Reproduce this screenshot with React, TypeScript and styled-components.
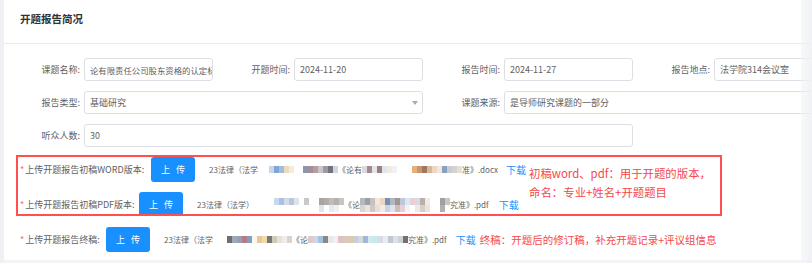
import React from "react";
import styled, { createGlobalStyle } from "styled-components";

const Global = createGlobalStyle`
  html, body { margin: 0; padding: 0; background: #ffffff; }
  body {
    font-family: "Microsoft YaHei", "Noto Sans CJK SC", "Noto Sans", sans-serif;
    -webkit-font-smoothing: antialiased;
  }
`;

const Page = styled.div`
  position: relative;
  display: flex;
  width: 812px;
  height: 263px;
  overflow: hidden;
  background: #f3f4f6;
`;

const Rail = styled.div`
  flex: none;
  width: 4px;
  background: #eef0f3;
`;

const Card = styled.div`
  flex: none;
  width: 808px;
  height: 260px;
  background: #ffffff;
  overflow: hidden;
`;

const ScrollShade = styled.div`
  position: absolute;
  top: 0;
  right: 0;
  width: 11px;
  height: 100%;
  background: linear-gradient(to right, rgba(242, 243, 245, 0.55), rgba(238, 240, 243, 0.9));
`;

const Header = styled.div`
  height: 44px;
  box-sizing: border-box;
  padding: 12px 0 0 16px;
  border-bottom: 1px solid #e8eaee;
  font-size: 10.5px;
  line-height: 14px;
  font-weight: 700;
  color: #303133;
`;

const FormGrid = styled.div`
  display: grid;
  grid-template-columns: repeat(4, 210px);
  row-gap: 10px;
  padding-top: 14px;
`;

const Field = styled.div<{ $span?: number }>`
  grid-column: span ${(p) => p.$span ?? 1};
  display: flex;
  align-items: center;
  height: 23px;
`;

const Label = styled.label`
  flex: none;
  width: 80px;
  box-sizing: border-box;
  padding-right: 4px;
  text-align: right;
  font-size: 9px;
  color: #606266;
  white-space: nowrap;
`;

const Input = styled.div<{ $small?: boolean }>`
  position: relative;
  flex: none;
  width: calc(100% - 81px);
  height: 23px;
  box-sizing: border-box;
  border: 1px solid #dcdfe6;
  border-radius: 3px;
  padding: 0 5px;
  display: flex;
  align-items: center;
  font-size: ${(p) => (p.$small ? 8.4 : 9)}px;
  color: #606266;
  white-space: nowrap;
  overflow: hidden;
`;

const Caret = styled.span`
  margin-left: auto;
  margin-right: -1px;
  width: 0;
  height: 0;
  border-left: 3px solid transparent;
  border-right: 3px solid transparent;
  border-top: 4px solid #a8abb2;
`;

const Uploads = styled.div`
  padding: 8px 0 0 12px;
`;

const Callout = styled.div`
  display: flex;
  align-items: flex-start;
  width: 706px;
  height: 61px;
  box-sizing: border-box;
  border: 2px solid #ff4f4f;
  padding-left: 2px;
  overflow: hidden;
`;

const RowStack = styled.div`
  flex: none;
  display: flex;
  flex-direction: column;
  gap: 10px;
`;

const UploadRow = styled.div<{ $indent?: number; $top?: number }>`
  display: flex;
  align-items: center;
  height: 25px;
  white-space: nowrap;
  padding-left: ${(p) => p.$indent ?? 0}px;
  margin-top: ${(p) => p.$top ?? 0}px;
`;

const UploadLabel = styled.span<{ $w: number }>`
  flex: none;
  width: ${(p) => p.$w}px;
  font-size: 9px;
  color: #606266;
`;

const Star = styled.span`
  color: #f56c6c;
  margin-right: 1px;
`;

const UploadButton = styled.button`
  flex: none;
  width: 44px;
  height: 25px;
  margin: 0 14px 0 0;
  padding: 0;
  border: none;
  border-radius: 3px;
  background: #1890ff;
  color: #ffffff;
  font-family: inherit;
  font-size: 9px;
  word-spacing: 4px;
`;

const FileName = styled.span`
  display: inline-flex;
  align-items: center;
  font-size: 8px;
  color: #606266;
`;

const MosaicGrid = styled.span<{ $rows: number; $ml: number }>`
  display: inline-grid;
  grid-auto-flow: column;
  grid-template-rows: repeat(${(p) => p.$rows}, 7px);
  grid-auto-columns: 5px;
  margin-left: ${(p) => p.$ml}px;
`;

const Tile = styled.span<{ $c: string }>`
  background: ${(p) => p.$c};
`;

const DownloadLink = styled.a<{ $ml: number }>`
  margin-left: ${(p) => p.$ml}px;
  font-size: 10px;
  color: #1890ff;
  text-decoration: none;
`;

const Note = styled.div`
  flex: none;
  margin-left: 3px;
  padding-top: 7px;
  font-size: 11.4px;
  line-height: 19px;
  color: #f5484a;
  white-space: nowrap;
`;

const InlineNote = styled.span`
  margin-left: 4px;
  font-size: 10.5px;
  color: #f5484a;
`;

function Mosaic({ colors, rows = 1, ml = 0 }: { colors: string[]; rows?: number; ml?: number }) {
  return (
    <MosaicGrid $rows={rows} $ml={ml}>
      {colors.map((c, i) => (
        <Tile key={i} $c={c} />
      ))}
    </MosaicGrid>
  );
}

const T = "transparent";

export default function App() {
  return (
    <>
      <Global />
      <Page>
        <Rail />
        <Card>
          <Header>开题报告简况</Header>
          <FormGrid>
            <Field>
              <Label>课题名称:</Label>
              <Input $small>论有限责任公司股东资格的认定标准</Input>
            </Field>
            <Field>
              <Label>开题时间:</Label>
              <Input>2024-11-20</Input>
            </Field>
            <Field>
              <Label>报告时间:</Label>
              <Input>2024-11-27</Input>
            </Field>
            <Field>
              <Label>报告地点:</Label>
              <Input>法学院314会议室</Input>
            </Field>
            <Field $span={2}>
              <Label>报告类型:</Label>
              <Input>
                基础研究
                <Caret />
              </Input>
            </Field>
            <Field $span={2}>
              <Label>课题来源:</Label>
              <Input>是导师研究课题的一部分</Input>
            </Field>
            <Field $span={3}>
              <Label>听众人数:</Label>
              <Input>30</Input>
            </Field>
          </FormGrid>

          <Uploads>
            <Callout>
              <RowStack>
                <UploadRow>
                  <UploadLabel $w={131}>
                    <Star>*</Star>上传开题报告初稿WORD版本:
                  </UploadLabel>
                  <UploadButton>上 传</UploadButton>
                  <FileName>
                    <span>23法律（法学</span>
                    <Mosaic ml={11} colors={["#c9d6e6", "#7fa6d6", "#a3bcdc", "#e9dcbf", "#f4ecd8"]} />
                    <Mosaic ml={9} colors={["#8e94a9", "#a58e95", "#b59da1", "#c9c5c9", "#9b9ba1", "#6f7481", "#d6d6da"]} />
                    <span>《论有</span>
                    <Mosaic colors={["#e0d8de", "#a4888f", "#e8e4e6", "#9a7f86", "#dfe6ee", "#f3ecdc", "#eef2f6", T]} />
                    <Mosaic ml={10} colors={["#e6b07e", "#c79770", "#a07862", "#d8b89a", "#eed7c0", "#f0e8dc", "#8aa0bc", "#c8ccd4", "#d6d2cc", "#e4e0d8"]} />
                    <span>准》.docx</span>
                  </FileName>
                  <DownloadLink $ml={8} href="#">下载</DownloadLink>
                </UploadRow>
                <UploadRow>
                  <UploadLabel $w={119}>
                    <Star>*</Star>上传开题报告初稿PDF版本:
                  </UploadLabel>
                  <UploadButton>上 传</UploadButton>
                  <FileName>
                    <span>23法律（法学）</span>
                    <Mosaic
                      ml={20}
                      rows={2}
                      colors={["#c8d8ee", T, "#a9c2e4", T, "#d5dce8", T, "#b8c8dc", T, "#dde4ee", T, T, T, "#c8c8cc", T, T, T, T, T, "#a8a4a0", "#dde6f0", "#b0aca8", T, "#c0bcb8", "#e4eaf2", "#b4b0ac", "#eef0f4", "#c8c4c0", T]}
                    />
                    <span>《论</span>
                    <Mosaic
                      rows={2}
                      colors={["#b8b8bc", "#d8d4d0", "#9aa0a8", "#e8e4e0", "#c8c0bc", "#d0c8c4", "#f0e8e0", "#e8e0d8", "#e8d8c0", "#f4ece0", "#7890b8", "#c8d4e4", "#b0b8c4", "#e0e4ea", "#a09890", "#c8c0b8", "#c0c8d8", "#e8d0d8", "#d8e8f8", "#f0f4f8", "#e8d0d8", T, "#dcd8e0", "#eee8ec", "#b8b0a8", "#d8d0c8", "#f0ece4", "#e8e4e0", T, T, T, T, "#a0a0a0", "#b0b0b0", "#c8c8c8", T]}
                    />
                    <span>究准》.pdf</span>
                  </FileName>
                  <DownloadLink $ml={10} href="#">下载</DownloadLink>
                </UploadRow>
              </RowStack>
              <Note>
                初稿word、pdf：用于开题的版本，
                <br />
                命名：专业+姓名+开题题目
              </Note>
            </Callout>

            <UploadRow $indent={4} $top={11}>
              <UploadLabel $w={86}>
                <Star>*</Star>上传开题报告终稿:
              </UploadLabel>
              <UploadButton>上 传</UploadButton>
              <FileName>
                <span>23法律（法学</span>
                <Mosaic
                  ml={14}
                  colors={["#6e6e70", "#a0a8b8", "#98a0b0", "#b87c80", "#7aa0d0", "#fff8e8", "#e8c898", "#f0d8b0", "#787878", "#d0c8b8", "#e4e0dc", "#f0ece8", "#d8d4d0"]}
                />
                <span>《论</span>
                <Mosaic
                  colors={["#e0c8c8", "#c8d8e8", "#a8c0e0", "#888888", "#e8e8e8", "#f0f0f0", "#e0c0c0", "#d8c8c0", "#e0c8a8", "#c0d0e0", "#d8d8d8", "#a0b8d8", "#d0e8f0", "#c8e8f0", "#d8dce0", "#e8ecf0", "#bfc8d0", "#e0e0e4", "#d0d0d4", "#707078"]}
                />
                <span>究准》.pdf</span>
              </FileName>
              <DownloadLink $ml={9} href="#">下载</DownloadLink>
              <InlineNote>终稿：开题后的修订稿，补充开题记录+评议组信息</InlineNote>
            </UploadRow>
          </Uploads>
        </Card>
        <ScrollShade />
      </Page>
    </>
  );
}
